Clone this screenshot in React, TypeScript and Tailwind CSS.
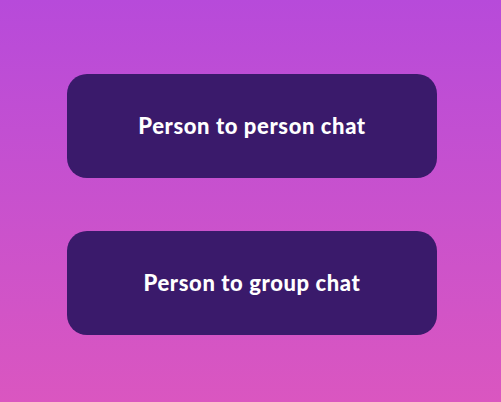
export default function App() {
  const options = ['Person to person chat', 'Person to group chat']
  return (
    <div className="h-[402px] w-full bg-gradient-to-b from-[#b74ada] to-[#da56c0] flex flex-col items-start pl-[67px] pt-[74px] gap-[53px]">
      {options.map(label => (
        <button
          key={label}
          className="w-[370px] h-[104px] rounded-[20px] bg-[#3a1a6b] text-white text-[22px] font-black font-['Lato',sans-serif] tracking-[0.6px] pb-[2px]"
        >
          {label}
        </button>
      ))}
    </div>
  )
}
